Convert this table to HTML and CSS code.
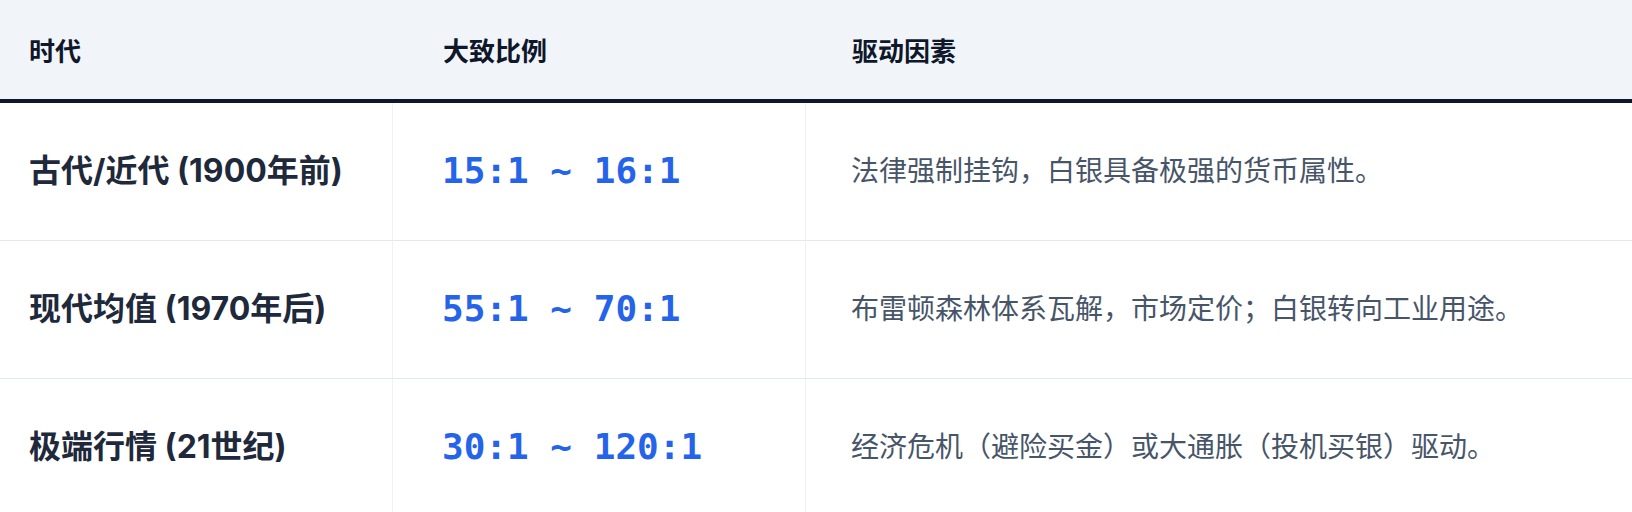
FILE: index.html
```html
<!DOCTYPE html>
<html lang="zh-CN">
<head>
<meta charset="utf-8">
<title>金银比</title>
<link rel="stylesheet" href="styles.css">
</head>
<body>
<table class="ratio-table">
  <colgroup>
    <col class="col-era">
    <col class="col-ratio">
    <col class="col-driver">
  </colgroup>
  <thead>
    <tr>
      <th class="c-era">时代</th>
      <th class="c-ratio">大致比例</th>
      <th class="c-driver">驱动因素</th>
    </tr>
  </thead>
  <tbody>
    <tr>
      <td class="c-era era">古代/近代 (1900年前)</td>
      <td class="c-ratio ratio">15:1 ~ 16:1</td>
      <td class="c-driver driver">法律强制挂钩，白银具备极强的货币属性。</td>
    </tr>
    <tr>
      <td class="c-era era">现代均值 (1970年后)</td>
      <td class="c-ratio ratio">55:1 ~ 70:1</td>
      <td class="c-driver driver">布雷顿森林体系瓦解，市场定价；白银转向工业用途。</td>
    </tr>
    <tr>
      <td class="c-era era">极端行情 (21世纪)</td>
      <td class="c-ratio ratio">30:1 ~ 120:1</td>
      <td class="c-driver driver">经济危机（避险买金）或大通胀（投机买银）驱动。</td>
    </tr>
  </tbody>
</table>
</body>
</html>
```

FILE: styles.css
```css
html, body {
  margin: 0;
  padding: 0;
  background: #ffffff;
}

body {
  font-family: "Inter", "Noto Sans CJK SC", sans-serif;
  overflow: hidden;
}

.ratio-table {
  width: 1632px;
  table-layout: fixed;
  border-collapse: separate;
  border-spacing: 0;
}

.col-era { width: 393px; }
.col-ratio { width: 413px; }
.col-driver { width: auto; }

.ratio-table th {
  background: #f1f5f9;
  color: #0f172a;
  font-size: 26px;
  font-weight: 700;
  text-align: left;
  vertical-align: middle;
  padding: 0;
  border-bottom: 4px solid #0f172a;
  box-sizing: border-box;
  height: 103px;
}

.ratio-table td {
  height: 138px;
  box-sizing: border-box;
  padding: 0;
  vertical-align: middle;
  border-bottom: 1px solid #e2e8f0;
  line-height: 1.4;
}

.ratio-table td.c-era,
.ratio-table td.c-ratio {
  border-right: 1px solid #eef2f7;
}

.c-era { padding-left: 29px !important; }
.c-ratio { padding-left: 49px !important; }
.c-driver { padding-left: 45px !important; }

.ratio-table th.c-ratio { padding-left: 50px !important; }
.ratio-table th.c-driver { padding-left: 46px !important; }

.era {
  font-size: 32px;
  font-weight: 700;
  color: #1e293b;
}

.ratio {
  font-family: "DejaVu Sans Mono", monospace;
  font-size: 36px;
  font-weight: 700;
  color: #2563eb;
}

.driver {
  font-size: 28px;
  font-weight: 400;
  color: #475569;
}
```
